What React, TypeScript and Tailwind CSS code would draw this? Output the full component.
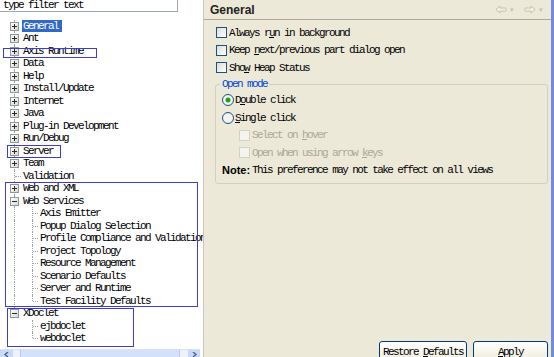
import React from "react";

const mono = "font-['Liberation_Mono',monospace] text-[11px] tracking-[-1.6px]";

type Kind = "plus" | "minus" | "leaf" | "child";

interface TreeItem {
  label: string;
  kind: Kind;
  selected?: boolean;
  lastTop?: boolean;
  lastChild?: boolean;
}

const items: TreeItem[] = [
  { label: "General", kind: "plus", selected: true },
  { label: "Ant", kind: "plus" },
  { label: "Axis Runtime", kind: "plus" },
  { label: "Data", kind: "plus" },
  { label: "Help", kind: "plus" },
  { label: "Install/Update", kind: "plus" },
  { label: "Internet", kind: "plus" },
  { label: "Java", kind: "plus" },
  { label: "Plug-in Development", kind: "plus" },
  { label: "Run/Debug", kind: "plus" },
  { label: "Server", kind: "plus" },
  { label: "Team", kind: "plus" },
  { label: "Validation", kind: "leaf" },
  { label: "Web and XML", kind: "plus" },
  { label: "Web Services", kind: "minus" },
  { label: "Axis Emitter", kind: "child" },
  { label: "Popup Dialog Selection", kind: "child" },
  { label: "Profile Compliance and Validation", kind: "child" },
  { label: "Project Topology", kind: "child" },
  { label: "Resource Management", kind: "child" },
  { label: "Scenario Defaults", kind: "child" },
  { label: "Server and Runtime", kind: "child" },
  { label: "Test Facility Defaults", kind: "child", lastChild: true },
  { label: "XDoclet", kind: "minus", lastTop: true },
  { label: "ejbdoclet", kind: "child" },
  { label: "webdoclet", kind: "child", lastChild: true },
];

const Expander: React.FC<{ open: boolean }> = ({ open }) => (
  <span className="absolute left-[10px] top-[2px] w-[9px] h-[9px] border border-[#8c9aa6] bg-gradient-to-br from-white to-[#dcd8c8] flex items-center justify-center">
    <svg width="7" height="7" viewBox="0 0 7 7">
      <path d="M1 3.5h5" stroke="#2a2a2a" strokeWidth="1" />
      {!open && <path d="M3.5 1v5" stroke="#2a2a2a" strokeWidth="1" />}
    </svg>
  </span>
);

const TreeRow: React.FC<{ item: TreeItem; afterXDoclet: boolean }> = ({ item, afterXDoclet }) => {
  const isChild = item.kind === "child";
  return (
    <div className={`relative h-[12.5px] leading-[12.5px] whitespace-nowrap ${mono} text-black`}>
      {/* top-level vertical guide */}
      {!afterXDoclet && (
        <span
          className={`absolute left-[14px] w-0 border-l border-dotted border-[#a0a0a0] ${
            item.lastTop ? "top-0 h-[6px]" : "top-0 h-full"
          }`}
        />
      )}
      {isChild && (
        <>
          <span
            className={`absolute left-[32px] w-0 border-l border-dotted border-[#a0a0a0] ${
              item.lastChild ? "top-0 h-[6px]" : "top-0 h-full"
            }`}
          />
          <span className="absolute left-[33px] top-[6px] w-[5px] border-t border-dotted border-[#a0a0a0]" />
        </>
      )}
      {item.kind === "leaf" && (
        <span className="absolute left-[15px] top-[6px] w-[6px] border-t border-dotted border-[#a0a0a0]" />
      )}
      {(item.kind === "plus" || item.kind === "minus") && <Expander open={item.kind === "minus"} />}
      <span
        className={`absolute top-0 ${isChild ? "left-[40px]" : "left-[23px]"} ${
          item.selected ? "bg-[#316ac5] text-white pl-[1px] pr-[4px] -ml-[1px]" : ""
        }`}
      >
        {item.label}
      </span>
    </div>
  );
};

const Check: React.FC<{ disabled?: boolean }> = ({ disabled }) => (
  <span
    className={`w-[11px] h-[11px] border shrink-0 ${
      disabled
        ? "border-[#d4d0c4] bg-[#f4f3ee]"
        : "border-[#1c5180] bg-gradient-to-br from-[#dcdcd7] to-white"
    }`}
  />
);

const Radio: React.FC<{ checked?: boolean }> = ({ checked }) => (
  <svg width="12" height="12" viewBox="0 0 12 12" className="shrink-0">
    <circle cx="6" cy="6" r="5.5" fill="#f4f4f0" stroke="#1c5180" />
    {checked && <circle cx="6" cy="6" r="2.5" fill="#21a121" />}
  </svg>
);

const U: React.FC<{ children: React.ReactNode }> = ({ children }) => (
  <span className="underline underline-offset-[1px]">{children}</span>
);

const NavArrow: React.FC<{ dir: "l" | "r" }> = ({ dir }) => (
  <svg width="12" height="9" viewBox="0 0 12 9">
    {dir === "l" ? (
      <path d="M1 4.5L5 1v2h6v3H5v2z" fill="#f3f1ea" stroke="#c4c1b3" />
    ) : (
      <path d="M11 4.5L7 1v2H1v3h6v2z" fill="#f3f1ea" stroke="#c4c1b3" />
    )}
  </svg>
);

const App: React.FC = () => {
  const xIndex = items.findIndex((i) => i.label === "XDoclet");
  return (
    <div className="w-[554px] h-[357px] flex overflow-hidden bg-white">
      {/* Left: preference tree */}
      <div className="w-[204px] shrink-0 flex flex-col border-r border-[#c4c4c4] bg-white relative overflow-hidden">
        <div className={`h-[12px] w-[178px] border-b border-r border-[#9aa8b8] pl-[3px] leading-[10px] ${mono} text-black`}>
          type filter text
        </div>
        <div className="flex-1 pt-[7.5px] overflow-hidden">
          {items.map((item, i) => (
            <TreeRow key={item.label} item={item} afterXDoclet={i > xIndex} />
          ))}
        </div>
        {/* horizontal scrollbar (partly visible) */}
        <div className="h-[8px] w-[200px] flex bg-[#eef2fc] border-t border-[#d8e2f6]">
          <div className="w-[13px] bg-[#c9daf8] flex items-start justify-center pt-[2px]">
            <svg width="5" height="5" viewBox="0 0 5 5">
              <path d="M4 0L1 2.5 4 5" fill="none" stroke="#4d6185" strokeWidth="1.4" />
            </svg>
          </div>
          <div className="ml-[7px] w-[160px] bg-[#d4e1fa] border-x border-[#b8cbef]" />
          <div className="ml-auto w-[12px] bg-[#c9daf8] flex items-start justify-center pt-[2px]">
            <svg width="5" height="5" viewBox="0 0 5 5">
              <path d="M1 0l3 2.5L1 5" fill="none" stroke="#4d6185" strokeWidth="1.4" />
            </svg>
          </div>
        </div>

        {/* annotation boxes drawn over the tree */}
        <div className="absolute left-[3px] top-[48px] w-[94px] h-[10px] border border-[#3c3cd2]" />
        <div className="absolute left-[7px] top-[145px] w-[54px] h-[13px] border border-[#3c3cd2]" />
        <div className="absolute left-[5px] top-[182px] w-[193px] h-[125px] border border-[#3c3cd2]" />
        <div className="absolute left-[7px] top-[308px] w-[127px] h-[39px] border border-[#3c3cd2]" />
      </div>

      {/* Right: preference page */}
      <div className="flex-1 flex flex-col bg-[#ece9d8] border-r-[3px] border-[#6e8fd8] overflow-hidden">
        <div className="h-[20px] shrink-0 flex items-center justify-between pl-[6px] pr-[8px] border-b border-[#aca899]">
          <span className="font-['Liberation_Sans',sans-serif] font-bold text-[12px] text-[#222] leading-none">
            General
          </span>
          <div className="flex items-center gap-[3px]">
            <NavArrow dir="l" />
            <span className="text-[7px] text-[#c4c1b3] leading-none">▾</span>
            <span className="w-[4px]" />
            <NavArrow dir="r" />
            <span className="text-[7px] text-[#c4c1b3] leading-none">▾</span>
          </div>
        </div>

        <div className={`pl-[12px] mt-[4px] ${mono} text-black`}>
          <div className="h-[17.5px] flex items-center gap-[2px]">
            <Check />
            <span>Always r<U>u</U>n in background</span>
          </div>
          <div className="h-[17.5px] flex items-center gap-[2px]">
            <Check />
            <span>Keep <U>n</U>ext/previous part dialog open</span>
          </div>
          <div className="h-[17.5px] flex items-center gap-[2px]">
            <Check />
            <span>Sho<U>w</U> Heap Status</span>
          </div>
        </div>

        <div className="relative ml-[11px] mr-[3px] mt-[7px] border border-[#d0d0bf] rounded-[3px] pt-[7px] pb-[4px] pl-[6px]">
          <span className={`absolute -top-[6px] left-[4px] px-[2px] bg-[#ece9d8] leading-[10px] text-[#0046d5] ${mono}`}>
            Open mode
          </span>
          <div className={`${mono} text-black`}>
            <div className="h-[17.5px] flex items-center gap-[1px]">
              <Radio checked />
              <span>D<U>o</U>uble click</span>
            </div>
            <div className="h-[17.5px] flex items-center gap-[1px]">
              <Radio />
              <span><U>S</U>ingle click</span>
            </div>
            <div className="h-[17.5px] flex items-center gap-[2px] pl-[17px] text-[#aca899]">
              <Check disabled />
              <span>Select on <U>h</U>over</span>
            </div>
            <div className="h-[17.5px] flex items-center gap-[2px] pl-[17px] text-[#aca899]">
              <Check disabled />
              <span>Open when using arrow <U>k</U>eys</span>
            </div>
            <div className="h-[17.5px] flex items-center gap-[2px]">
              <span className="font-['Liberation_Sans',sans-serif] font-bold text-[11px] tracking-normal">Note:</span>
              <span>This preference may not take effect on all views</span>
            </div>
          </div>
        </div>

        <div className="mt-auto flex justify-end gap-[6px] mr-[3px] -mb-[7px]">
          <button className={`w-[88px] h-[23px] rounded-[3px] border border-[#003c74] bg-gradient-to-b from-white to-[#ece9d8] text-black ${mono}`}>
            Restore <U>D</U>efaults
          </button>
          <button className={`w-[75px] h-[23px] rounded-[3px] border border-[#003c74] bg-gradient-to-b from-white to-[#ece9d8] text-black ${mono}`}>
            <U>A</U>pply
          </button>
        </div>
      </div>
    </div>
  );
};

export default App;
